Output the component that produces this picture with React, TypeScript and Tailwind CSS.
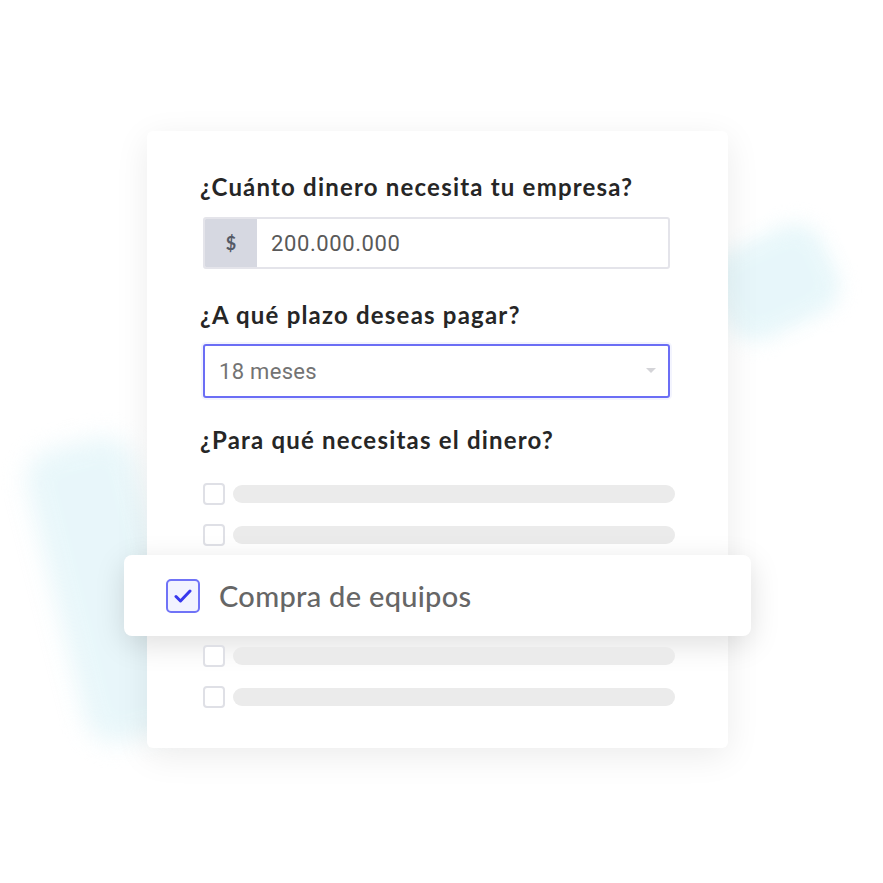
const heading = "font-['Lato','Noto_Sans',sans-serif] text-[24px] leading-[28px] font-bold text-[#262626] tracking-[1.2px]";

function SkeletonRow() {
  return (
    <div className="flex items-center">
      <div className="h-[22px] w-[22px] shrink-0 rounded-[4px] border-2 border-[#dfe0e6] bg-white" />
      <div className="ml-[8px] h-[18px] flex-1 rounded-full bg-[#ebebeb]" />
    </div>
  );
}

export default function App() {
  return (
    <div className="relative h-[883px] w-[883px] overflow-hidden bg-white">
      {/* watercolor strokes behind the card */}
      <div className="absolute left-[715px] top-[235px] h-[95px] w-[120px] -rotate-[25deg] rounded-[30px] bg-[#e2f5f9] opacity-80 blur-[10px]" />
      <div className="absolute left-[55px] top-[440px] h-[300px] w-[110px] -rotate-[14deg] rounded-[30px] bg-[#e3f5f9] opacity-80 blur-[12px]" />

      <div className="relative ml-[147px] mt-[131px] h-[617px] w-[581px] rounded-[6px] bg-white pl-[56px] pr-[53px] pt-[42px] shadow-[0_8px_34px_rgba(0,0,0,0.08)]">
        <h2 className={`${heading} -ml-[3px]`}>¿Cuánto dinero necesita tu empresa?</h2>

        <div className="mt-[16px] flex h-[52px] w-[467px] overflow-hidden rounded-[3px] border-2 border-[#e4e4ea]">
          <div className="flex w-[52px] items-center justify-center bg-[#d6d8e1] font-['Lato',sans-serif] text-[18px] font-bold text-[#555a66]">
            $
          </div>
          <div className="flex flex-1 items-center pl-[14px] font-['Roboto',sans-serif] text-[22px] tracking-[0.6px] text-[#595959]">
            200.000.000
          </div>
        </div>

        <h2 className={`${heading} -ml-[3px] mt-[32px]`}>¿A qué plazo deseas pagar?</h2>

        <div className="mt-[15px] flex h-[54px] w-[467px] items-center justify-between rounded-[3px] border-2 border-[#6b6ef5] pl-[14px] pr-[12px] shadow-[0_0_0_2px_rgba(107,110,245,0.08)]">
          <span className="font-['Roboto',sans-serif] text-[22px] tracking-[0.3px] text-[#737373]">18 meses</span>
          <svg width="10" height="6" viewBox="0 0 10 6">
            <path d="M0 0 L10 0 L5 5 Z" fill="#d4d4d8" />
          </svg>
        </div>

        <h2 className={`${heading} -ml-[3px] mt-[28px]`}>¿Para qué necesitas el dinero?</h2>

        <div className="mt-[29px] flex flex-col gap-[19px]">
          <SkeletonRow />
          <SkeletonRow />
          <div className="-my-[10px] -ml-[79px] -mr-[76px] flex h-[81px] items-center rounded-[8px] bg-white pl-[42px] shadow-[0_8px_30px_rgba(0,0,0,0.13)]">
            <div className="flex h-[34px] w-[34px] items-center justify-center rounded-[5px] border-2 border-[#7073f7] bg-[#f2f3ff]">
              <svg width="18" height="14" viewBox="0 0 18 14">
                <path d="M2 7.5 L6.5 12 L16 2" fill="none" stroke="#3838ee" strokeWidth="3" strokeLinecap="round" strokeLinejoin="round" />
              </svg>
            </div>
            <span className="ml-[19px] font-['Lato',sans-serif] text-[29px] font-medium tracking-[0.3px] text-[#666666]">Compra de equipos</span>
          </div>
          <SkeletonRow />
          <SkeletonRow />
        </div>
      </div>
    </div>
  );
}
